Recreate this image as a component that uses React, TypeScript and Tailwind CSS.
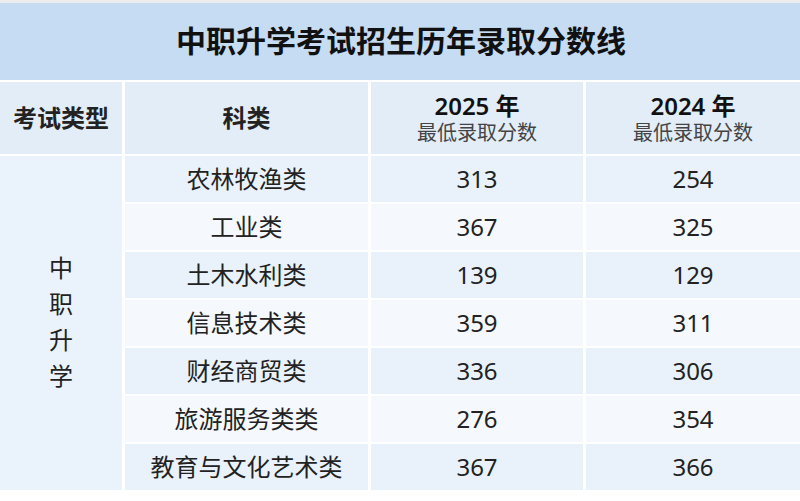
import React from "react";

const rows: [string, string, string][] = [
  ["农林牧渔类", "313", "254"],
  ["工业类", "367", "325"],
  ["土木水利类", "139", "129"],
  ["信息技术类", "359", "311"],
  ["财经商贸类", "336", "306"],
  ["旅游服务类类", "276", "354"],
  ["教育与文化艺术类", "367", "366"],
];

export default function App() {
  return (
    <div
      className="w-[800px] h-[501px] bg-white overflow-hidden"
      style={{ fontFamily: '"Noto Sans", "Noto Sans CJK SC", sans-serif' }}
    >
      <div className="h-[3px] bg-[#ececec]" />
      <div className="grid grid-cols-[122px_243px_212px_214px] gap-x-[3px] gap-y-[2px] grid-rows-[77px_72px_repeat(7,46px)]">
        <div className="col-span-4 bg-[#c6dcf2] flex items-center justify-center text-[30px] font-bold text-[#111] leading-none pb-[2px] pl-[2px]">
          中职升学考试招生历年录取分数线
        </div>

        <div className="bg-[#e2edf8] flex items-center justify-center text-[24px] font-semibold text-[#222]">
          考试类型
        </div>
        <div className="bg-[#e2edf8] flex items-center justify-center text-[24px] font-semibold text-[#222]">
          科类
        </div>
        <div className="bg-[#e2edf8] flex flex-col items-center justify-center pt-[2px]">
          <div className="text-[24px] font-semibold text-[#111] leading-[27px]">2025 年</div>
          <div className="text-[20px] text-[#444] leading-[27px]">最低录取分数</div>
        </div>
        <div className="bg-[#e2edf8] flex flex-col items-center justify-center pt-[2px]">
          <div className="text-[24px] font-semibold text-[#111] leading-[27px]">2024 年</div>
          <div className="text-[20px] text-[#444] leading-[27px]">最低录取分数</div>
        </div>

        <div className="row-span-7 bg-[#eaf3fc] flex flex-col items-center justify-center text-[24px] text-[#222] leading-[36px] pb-[2px]">
          <span>中</span>
          <span>职</span>
          <span>升</span>
          <span>学</span>
        </div>

        {rows.map(([name, a, b], i) => {
          const bg = i % 2 === 0 ? "bg-[#e9f2fb]" : "bg-[#f5f9fe]";
          return (
            <React.Fragment key={name}>
              <div className={`${bg} flex items-center justify-center text-[24px] text-[#222]`}>
                {name}
              </div>
              <div className={`${bg} flex items-center justify-center text-[24px] text-[#222]`}>
                {a}
              </div>
              <div className={`${bg} flex items-center justify-center text-[24px] text-[#222]`}>
                {b}
              </div>
            </React.Fragment>
          );
        })}
      </div>
    </div>
  );
}
